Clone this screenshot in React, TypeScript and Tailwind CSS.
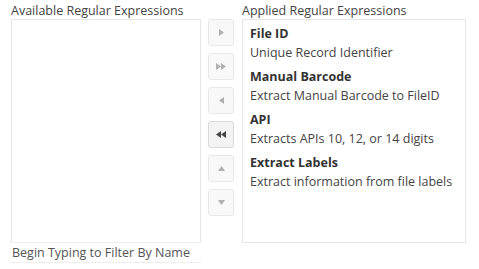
import { ReactNode } from "react";

const applied = [
  { name: "File ID", desc: "Unique Record Identifier" },
  { name: "Manual Barcode", desc: "Extract Manual Barcode to FileID" },
  { name: "API", desc: "Extracts APIs 10, 12, or 14 digits" },
  { name: "Extract Labels", desc: "Extract information from file labels" },
];

const Tri = ({ dir }: { dir: "r" | "l" | "u" | "d" }) => {
  const pts = {
    r: "0,0 5,3.5 0,7",
    l: "5,0 0,3.5 5,7",
    u: "0,5 3.5,0 7,5",
    d: "0,0 7,0 3.5,5",
  }[dir];
  const w = dir === "r" || dir === "l" ? 5 : 7;
  const h = dir === "r" || dir === "l" ? 7 : 5;
  return (
    <svg width={w} height={h} viewBox={`0 0 ${w} ${h}`} fill="currentColor">
      <polygon points={pts} />
    </svg>
  );
};

function MoveButton({ children, active }: { children: ReactNode; active?: boolean }) {
  return (
    <button
      className={`w-[26px] h-[27px] rounded-[3px] border flex items-center justify-center ${
        active ? "bg-[#f3f3f3] border-[#d9d9d9] text-[#444]" : "bg-[#f8f8f8] border-[#e8e8e8] text-[#b0b0b0]"
      }`}
    >
      {children}
    </button>
  );
}

export default function App() {
  return (
    <div className="w-[479px] h-[269px] bg-white text-[#333] text-[12.5px] leading-[19px] whitespace-nowrap font-['Segoe_UI','Open_Sans',sans-serif] flex pl-[11px] pt-[2px]">
      {/* available */}
      <div className="w-[190px] flex flex-col">
        <div className="h-[17px] leading-[17px] text-[#444]">Available Regular Expressions</div>
        <div className="h-[223px] border border-[#e6e6e6] border-b-0" />
        <div className="h-[21px] border-t border-b border-[#eeeeee] px-[1px] leading-[19px] text-[#555]">
          Begin Typing to Filter By Name
        </div>
      </div>

      {/* buttons */}
      <div className="ml-[7px] pt-[17px] flex flex-col gap-[7px]">
        <MoveButton><Tri dir="r" /></MoveButton>
        <MoveButton><span className="flex"><Tri dir="r" /><Tri dir="r" /></span></MoveButton>
        <MoveButton><Tri dir="l" /></MoveButton>
        <MoveButton active><span className="flex"><Tri dir="l" /><Tri dir="l" /></span></MoveButton>
        <MoveButton><Tri dir="u" /></MoveButton>
        <MoveButton><Tri dir="d" /></MoveButton>
      </div>

      {/* applied */}
      <div className="ml-[8px] w-[224px] flex flex-col">
        <div className="h-[17px] leading-[17px] text-[#444]">Applied Regular Expressions</div>
        <div className="h-[224px] border border-[#e6e6e6] px-[7px] pt-[4px] flex flex-col gap-[5px]">
          {applied.map((a) => (
            <div key={a.name}>
              <div className="font-bold text-[#333]">{a.name}</div>
              <div className="text-[#444]">{a.desc}</div>
            </div>
          ))}
        </div>
      </div>
    </div>
  );
}
